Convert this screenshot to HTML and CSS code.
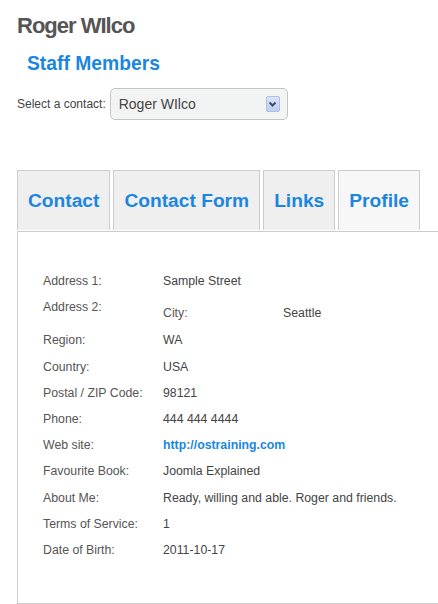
FILE: index.html
```html
<!DOCTYPE html>
<html lang="en">
<head>
    <meta charset="UTF-8">
    <meta name="viewport" content="width=device-width, initial-scale=1.0">
    <title>Roger WIlco - Staff Members</title>
    <link rel="stylesheet" href="styles.css">
</head>
<body>
    <div class="page">
        <h1 class="contact-name">Roger WIlco</h1>
        <h2 class="category">Staff Members</h2>

        <form class="contact-select">
            <label class="select-label">Select a contact:</label>
            <div class="select-box">
                <span class="select-value">Roger WIlco</span>
                <span class="select-arrow">
                    <svg width="11" height="11" viewBox="0 0 11 11"><polyline points="2.5,3.5 5.5,6.5 8.5,3.5" fill="none" stroke="#3f4d6b" stroke-width="2"/></svg>
                </span>
            </div>
        </form>

        <ul class="tabs">
            <li class="tab">Contact</li>
            <li class="tab">Contact Form</li>
            <li class="tab">Links</li>
            <li class="tab tab-active">Profile</li>
        </ul>

        <div class="panel">
            <div class="details">
                <div class="row"><span class="label">Address 1:</span><span class="value">Sample Street</span></div>
                <div class="row"><span class="label">Address 2:</span>
                    <div class="value nested">
                        <span class="label">City:</span><span class="value">Seattle</span>
                    </div>
                </div>
                <div class="row"><span class="label">Region:</span><span class="value">WA</span></div>
                <div class="row"><span class="label">Country:</span><span class="value">USA</span></div>
                <div class="row"><span class="label">Postal / ZIP Code:</span><span class="value">98121</span></div>
                <div class="row"><span class="label">Phone:</span><span class="value">444 444 4444</span></div>
                <div class="row"><span class="label">Web site:</span><span class="value"><a href="#">http://ostraining.com</a></span></div>
                <div class="row"><span class="label">Favourite Book:</span><span class="value">Joomla Explained</span></div>
                <div class="row"><span class="label">About Me:</span><span class="value">Ready, willing and able. Roger and friends.</span></div>
                <div class="row"><span class="label">Terms of Service:</span><span class="value">1</span></div>
                <div class="row"><span class="label">Date of Birth:</span><span class="value">2011-10-17</span></div>
            </div>
        </div>
    </div>
</body>
</html>
```

FILE: styles.css
```css
html {
    overflow: hidden;
}

body {
    font-family: 'Liberation Sans', Arial, sans-serif;
    background-color: #ffffff;
    color: #444;
    margin: 0;
    padding: 0;
}

.page {
    padding: 13px 0 0 17px;
}

.contact-name {
    margin: 0;
    font-size: 22px;
    line-height: 26px;
    letter-spacing: -1px;
    color: #555;
}

.category {
    margin: 13px 0 0 0;
    padding-left: 10px;
    font-size: 19.3px;
    line-height: 24px;
    color: #1a86e2;
}

.contact-select {
    display: flex;
    align-items: center;
    margin-top: 12px;
}

.select-label {
    font-size: 12px;
    color: #444;
    margin-right: 4px;
}

.select-box {
    display: flex;
    align-items: center;
    justify-content: space-between;
    box-sizing: border-box;
    width: 178px;
    height: 32px;
    padding: 0 7px 0 8px;
    background-color: #f2f3f3;
    border: 1px solid #c4c4c4;
    border-radius: 5px;
    font-size: 14px;
    color: #444;
}

.select-arrow {
    display: flex;
    align-items: center;
    justify-content: center;
    box-sizing: border-box;
    width: 14px;
    height: 16px;
    background: linear-gradient(#dbe5fa, #bccdf4);
    border: 1px solid #aebfe6;
    border-radius: 2px;
}

.tabs {
    display: flex;
    gap: 3px;
    list-style: none;
    margin: 50px 0 1px 0;
    padding: 0;
}

.tab {
    box-sizing: border-box;
    height: 60px;
    padding: 0 10px;
    line-height: 59px;
    background-color: #efefef;
    border: 1px solid #cccccc;
    border-bottom: none;
    font-size: 19.2px;
    font-weight: bold;
    color: #1a86e2;
}

.tab-active {
    background-color: #f7f7f7;
}

.panel {
    box-sizing: border-box;
    width: 440px;
    height: 373px;
    padding: 36px 0 0 25px;
    border: 1px solid #cccccc;
}

.row {
    display: grid;
    grid-template-columns: 120px 1fr;
    padding: 5.1px 0;
    font-size: 12.3px;
    line-height: 16px;
}

.label {
    color: #555;
}

.value {
    color: #444;
}

.nested {
    display: grid;
    grid-template-columns: 120px 1fr;
    padding: 6px 0 1px 0;
}

.value a {
    color: #1a86e2;
    font-weight: bold;
    text-decoration: none;
}
```
